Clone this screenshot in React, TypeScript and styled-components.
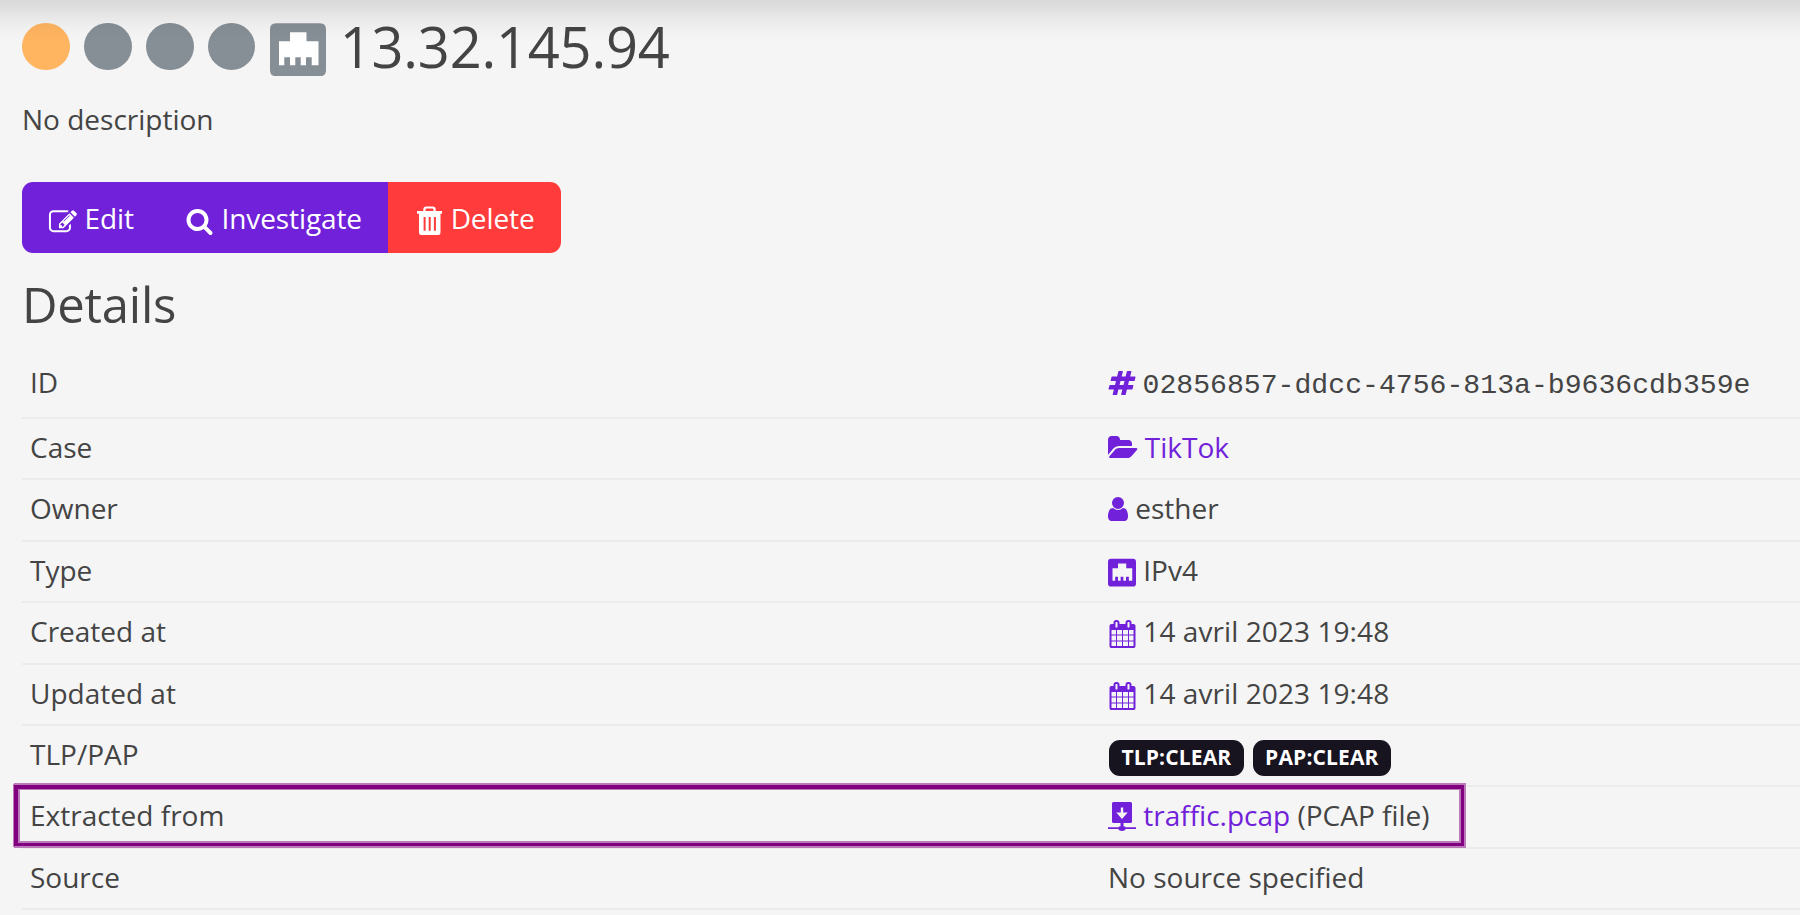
import React from "react";
import styled, { createGlobalStyle } from "styled-components";

const PURPLE = "#7021d9";

const GlobalStyle = createGlobalStyle`
  body {
    margin: 0;
    background: #f5f5f5;
    color: #444;
    font-family: "Open Sans", sans-serif;
    font-size: 28px;
    line-height: 42px;
    overflow: hidden;
  }
`;

const Page = styled.main`
  position: relative;
  box-sizing: border-box;
  width: 1800px;
  height: 915px;
  padding-left: 22px;
  overflow: hidden;
`;

const TopShade = styled.div`
  position: absolute;
  inset: 0 0 auto 0;
  height: 42px;
  background: linear-gradient(
    rgba(0, 0, 0, 0.11) 0,
    rgba(0, 0, 0, 0.095) 7px,
    rgba(0, 0, 0, 0.055) 17px,
    rgba(0, 0, 0, 0.02) 29px,
    rgba(0, 0, 0, 0) 42px
  );
`;

const Header = styled.header`
  display: flex;
  align-items: flex-start;
  gap: 14.1px;
  height: 76px;
  padding-top: 22.6px;
  box-sizing: border-box;
`;

const Dot = styled.span<{ $active?: boolean }>`
  width: 47.8px;
  height: 47.8px;
  border-radius: 50%;
  background: ${(p) => (p.$active ? "#ffb460" : "#868e96")};
`;

const TypeIcon = styled.span`
  display: flex;
  color: #868e96;
`;

const Title = styled.h1`
  margin: -14px 0 0;
  font-size: 56px;
  font-weight: 400;
  line-height: 74px;
  letter-spacing: -0.2px;
`;

const Description = styled.p`
  margin: 22px 0 0;
`;

const ButtonGroup = styled.div`
  display: flex;
  width: max-content;
  height: 71px;
  margin-top: 42px;
  border-radius: 11px;
  overflow: hidden;
`;

const Button = styled.button<{ $danger?: boolean }>`
  display: flex;
  align-items: baseline;
  gap: 8.3px;
  margin: 0;
  padding: 14.5px 26.2px;
  border: 0;
  background: ${(p) => (p.$danger ? "#ff3b3b" : PURPLE)};
  color: #fff;
  font: inherit;
  letter-spacing: -0.1px;
`;

const SectionTitle = styled.h2`
  margin: 21px 0 20px;
  font-size: 49px;
  font-weight: 400;
  line-height: 60px;
  letter-spacing: -0.25px;
`;

const Details = styled.dl`
  margin: 0;
`;

const Row = styled.div<{ $first?: boolean }>`
  display: grid;
  grid-template-columns: 1079px 1fr;
  box-sizing: border-box;
  height: ${(p) => (p.$first ? "65px" : "61.375px")};
  padding-top: 7px;
  border-bottom: 2px solid #ebebeb;
`;

const Label = styled.dt`
  padding-left: 8px;
`;

const Value = styled.dd<{ $mono?: boolean; $spaced?: boolean }>`
  display: flex;
  align-items: baseline;
  gap: ${(p) => (p.$mono ? "6.5px" : "7.3px")};
  height: 42px;
  margin: 0;
  padding-top: ${(p) => (p.$mono ? "3.5px" : "0")};
  padding-left: 7px;
  letter-spacing: ${(p) => (p.$spaced ? "0.08px" : "normal")};
  white-space: nowrap;
`;

const Code = styled.code`
  font-family: "Liberation Mono", monospace;
  font-size: 28.15px;
`;

const Link = styled.a`
  color: ${PURPLE};
`;

const Badge = styled.span`
  align-self: flex-start;
  box-sizing: border-box;
  height: 36px;
  margin: 7px 0.7px 0 1px;
  padding: 0 12.4px;
  border-radius: 11px;
  background: #17131f;
  color: #fff;
  font-size: 21px;
  font-weight: 700;
  line-height: 34px;
  letter-spacing: 0.15px;
`;

const Highlight = styled.div`
  position: absolute;
  left: 14px;
  top: 785px;
  box-sizing: border-box;
  width: 1450px;
  height: 61px;
  border: solid #800080;
  border-width: 4px 3px 3px 4px;
  box-shadow:
    0 0 0 1px #ba7aba,
    1px -1px 0 1px #ba7aba,
    1px 1px 0 1px #ba7aba,
    inset 2px 1px 0 #ba7aba,
    inset -2px -2px 0 #ba7aba;
`;

const Glyph = styled.svg<{ $w?: number; $tint?: boolean }>`
  flex: none;
  width: ${(p) => p.$w ?? 28}px;
  height: 28px;
  transform: translateY(4px);
  overflow: visible;
  fill: currentColor;
  color: ${(p) => (p.$tint ? PURPLE : "inherit")};
`;

const EditIcon = () => (
  <Glyph viewBox="0 0 1792 1792">
    <path d="M888 1184l116-116-152-152-116 116v56h96v96h56zm440-720q-16-16-33 1l-350 350q-17 17-1 33t33-1l350-350q17-17 1-33zm80 594v190q0 119-84.5 203.5t-203.5 84.5h-832q-119 0-203.5-84.5t-84.5-203.5v-832q0-119 84.5-203.5t203.5-84.5h832q63 0 117 25 15 7 18 23 3 17-9 29l-49 49q-14 14-32 8-23-6-45-6h-832q-66 0-113 47t-47 113v832q0 66 47 113t113 47h832q66 0 113-47t47-113v-126q0-13 9-22l64-64q15-15 35-7t20 29zm-96-738l288 288-672 672h-288v-288zm444 132l-92 92-288-288 92-92q28-28 68-28t68 28l152 152q28 28 28 68t-28 68z" transform="translate(60 200)" />
  </Glyph>
);

const SearchIcon = () => (
  <Glyph $w={27} viewBox="32 0 1728 1792">
    <path d="M1216 832q0-185-131.5-316.5t-316.5-131.5-316.5 131.5-131.5 316.5 131.5 316.5 316.5 131.5 316.5-131.5 131.5-316.5zm512 832q0 52-38 90t-90 38q-54 0-90-38l-343-342q-179 124-399 124-143 0-273.5-55.5t-225-150-150-225-55.5-273.5 55.5-273.5 150-225 225-150 273.5-55.5 273.5 55.5 225 150 150 225 55.5 273.5q0 220-124 399l343 343q37 37 37 90z" transform="translate(0 128)" />
  </Glyph>
);

const TrashIcon = () => (
  <Glyph viewBox="0 0 28 28">
    <path
      fillRule="evenodd"
      d="M3 6h6.300V4.500q0-3 3-3h6.400q3 0 3 3V6H28v2.800H3zM11.500 6h8V4.800q0-1.200-1.200-1.200h-5.600q-1.200 0-1.200 1.200zM5 8.800h21.500V27.500q0 2.500-2.500 2.500H7.500q-2.500 0-2.500-2.500zM9.600 12v13.800h2V12zm5.100 0v13.800h2V12zm5.200 0v13.800h2V12z"
    />
  </Glyph>
);

const HashIcon = () => (
  <Glyph $tint viewBox="0 0 1792 1792">
    <path d="M991 1024l64-256h-254l-64 256h254zm768-504l-56 224q-7 24-31 24h-327l-64 256h311q15 0 25 12 10 14 6 28l-56 224q-5 24-31 24h-327l-81 328q-7 24-31 24h-224q-16 0-26-12-9-12-6-28l78-312h-254l-81 328q-7 24-31 24h-225q-15 0-25-12-9-12-6-28l78-312h-311q-15 0-25-12-9-12-6-28l56-224q7-24 31-24h327l64-256h-311q-15 0-25-12-10-14-6-28l56-224q5-24 31-24h327l81-328q7-24 32-24h224q15 0 25 12 9 12 6 28l-78 312h254l81-328q7-24 32-24h224q15 0 25 12 9 12 6 28l-78 312h311q15 0 25 12 9 12 6 28z" />
  </Glyph>
);

const FolderIcon = () => (
  <Glyph $tint $w={29.5} viewBox="0 0 1888 1792">
    <path d="M1879 952q0 31-31 66l-336 396q-43 51-120.5 86.500t-143.500 35.500h-1088q-34 0-60.500-13t-26.500-43q0-31 31-66l336-396q43-51 120.500-86.500t143.500-35.500h1088q34 0 60.500 13t26.500 43zm-343-344v160h-832q-94 0-197 47.500t-164 119.500l-337 396-5 6q0-4-.5-12.500t-.5-12.500v-960q0-92 66-158t158-66h320q92 0 158 66t66 158v32h544q92 0 158 66t66 158z" />
  </Glyph>
);

const UserIcon = () => (
  <Glyph $tint $w={20} viewBox="256 0 1280 1792">
    <path d="M1536 1399q0 109-62.5 187t-150.5 78h-854q-88 0-150.5-78t-62.5-187q0-85 8.5-160.5t31.5-152 58.5-131 94-89 134.5-34.5q131 128 313 128t313-128q76 0 134.5 34.5t94 89 58.5 131 31.5 152 8.5 160.5zm-256-887q0 159-112.5 271.5t-271.5 112.5-271.5-112.5-112.5-271.5 112.5-271.5 271.5-112.5 271.5 112.5 112.5 271.5z" />
  </Glyph>
);

const ETHERNET =
  "M6 0H50q6 0 6 6V47q0 6-6 6H6q-6 0-6-6V6q0-6 6-6zM20 9V18H9V42H14.300V34H20V42H25.300V34H30.700V42H36V34H41.700V42H48.500V18H36.500V9z";

const EthernetIcon = () => (
  <Glyph $tint viewBox="0 0 28 28">
    <path fillRule="evenodd" d={ETHERNET} transform="translate(0 1.8) scale(.5 .525)" />
  </Glyph>
);

const CalendarIcon = () => (
  <Glyph $tint viewBox="0 0 1792 1792">
    <path d="M192 1664h288v-288h-288v288zm352 0h320v-288h-320v288zm-352-352h288v-320h-288v320zm352 0h320v-320h-320v320zm-352-384h288v-288h-288v288zm736 736h320v-288h-320v288zm-384-736h320v-288h-320v288zm768 736h288v-288h-288v288zm-384-352h320v-320h-320v320zm-352-864v-288q0-13-9.5-22.5t-22.5-9.5h-64q-13 0-22.5 9.5t-9.5 22.5v288q0 13 9.5 22.5t22.5 9.5h64q13 0 22.5-9.5t9.5-22.5zm736 864h288v-320h-288v320zm-384-384h320v-288h-320v288zm384 0h288v-288h-288v288zm32-480v-288q0-13-9.5-22.5t-22.5-9.5h-64q-13 0-22.5 9.5t-9.5 22.5v288q0 13 9.5 22.5t22.5 9.5h64q13 0 22.5-9.5t9.5-22.5zm384-64v1280q0 52-38 90t-90 38h-1408q-52 0-90-38t-38-90v-1280q0-52 38-90t90-38h128v-96q0-66 47-113t113-47h64q66 0 113 47t47 113v96h384v-96q0-66 47-113t113-47h64q66 0 113 47t47 113v96h128q52 0 90 38t38 90z" transform="translate(32 128)" />
  </Glyph>
);

const CaptureIcon = () => (
  <Glyph $tint viewBox="0 0 28 28">
    <path
      fillRule="evenodd"
      d="M5.500 0h17q1.500 0 1.500 1.500v18q0 1.500-1.500 1.500h-7v3.300q1.500.2 2 1H28v1.800H17.800q-.8 2-3.800 2t-3.800-2H0v-1.800h10.500q.5-.8 2-1V21h-7Q4 21 4 19.500v-18Q4 0 5.500 0zM12.800 5.500v5H8.300L14 17l5.700-6.500h-4.500v-5z"
    />
  </Glyph>
);

export default function App() {
  return (
    <>
      <GlobalStyle />
      <Page>
        <Header>
          <Dot $active />
          <Dot />
          <Dot />
          <Dot />
          <TypeIcon>
            <svg width="56" height="53.4" viewBox="0 0 56 53">
              <rect x="6" y="5" width="45" height="42" fill="#fff" />
              <path fillRule="evenodd" fill="currentColor" d={ETHERNET} />
            </svg>
          </TypeIcon>
          <Title>13.32.145.94</Title>
        </Header>
        <Description>No description</Description>
        <ButtonGroup>
          <Button>
            <EditIcon />
            Edit
          </Button>
          <Button>
            <SearchIcon />
            Investigate
          </Button>
          <Button $danger>
            <TrashIcon />
            Delete
          </Button>
        </ButtonGroup>
        <SectionTitle>Details</SectionTitle>
        <Details>
          <Row $first>
            <Label>ID</Label>
            <Value $mono>
              <HashIcon />
              <Code>02856857-ddcc-4756-813a-b9636cdb359e</Code>
            </Value>
          </Row>
          <Row>
            <Label>Case</Label>
            <Value>
              <FolderIcon />
              <Link>TikTok</Link>
            </Value>
          </Row>
          <Row>
            <Label>Owner</Label>
            <Value>
              <UserIcon />
              esther
            </Value>
          </Row>
          <Row>
            <Label>Type</Label>
            <Value>
              <EthernetIcon />
              IPv4
            </Value>
          </Row>
          <Row>
            <Label>Created at</Label>
            <Value $spaced>
              <CalendarIcon />
              14 avril 2023 19:48
            </Value>
          </Row>
          <Row>
            <Label>Updated at</Label>
            <Value $spaced>
              <CalendarIcon />
              14 avril 2023 19:48
            </Value>
          </Row>
          <Row>
            <Label>TLP/PAP</Label>
            <Value>
              <Badge>TLP:CLEAR</Badge>
              <Badge>PAP:CLEAR</Badge>
            </Value>
          </Row>
          <Row>
            <Label>Extracted from</Label>
            <Value>
              <CaptureIcon />
              <Link>traffic.pcap</Link>
              <span>(PCAP file)</span>
            </Value>
          </Row>
          <Row>
            <Label>Source</Label>
            <Value>No source specified</Value>
          </Row>
        </Details>
        <TopShade />
        <Highlight />
      </Page>
    </>
  );
}
